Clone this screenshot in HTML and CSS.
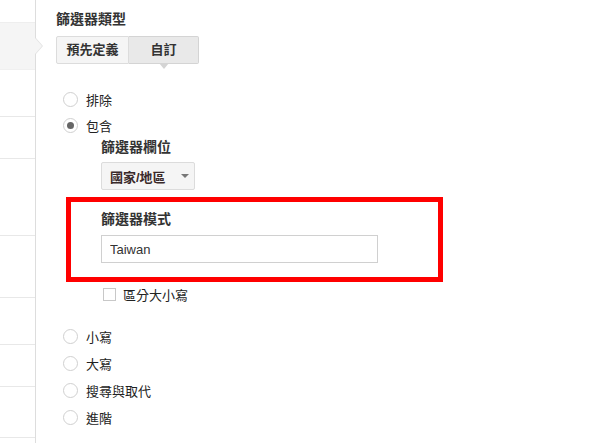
FILE: index.html
```html
<!DOCTYPE html>
<html>
<head lang="zh-tw">
    <meta charset="UTF-8">
    <title>篩選器類型</title>
    <link rel="stylesheet" href="styles.css">
</head>
<body>
    <div class="page">
        <ul class="side">
            <li></li>
            <li class="side-on"></li>
            <li></li>
            <li></li>
            <li></li>
            <li></li>
            <li></li>
            <li></li>
            <li></li>
        </ul>
        <div class="main">
            <h3 class="title">篩選器類型</h3>
            <div class="tabs">
                <a href="javascript:" class="tab tab-pre">預先定義</a>
                <a href="javascript:" class="tab tab-own tab-on">自訂</a>
            </div>
            <ul class="opts">
                <li class="opt"><span class="radio"></span>排除</li>
                <li class="opt"><span class="radio radio-on"></span>包含</li>
            </ul>
            <div class="sub">
                <p class="label field-label">篩選器欄位</p>
                <a href="javascript:" class="select">國家/地區<span class="caret"></span></a>
                <div class="mark">
                    <p class="label">篩選器模式</p>
                    <input type="text" class="text" value="Taiwan">
                </div>
                <p class="check"><span class="box"></span>區分大小寫</p>
            </div>
            <ul class="opts opts-more">
                <li class="opt opt-wide"><span class="radio"></span>小寫</li>
                <li class="opt opt-wide"><span class="radio"></span>大寫</li>
                <li class="opt opt-wide"><span class="radio"></span>搜尋與取代</li>
                <li class="opt opt-wide"><span class="radio"></span>進階</li>
            </ul>
        </div>
    </div>
</body>
</html>
```

FILE: styles.css
```css
body,p,ul,h3 { margin: 0; padding: 0;}
body { font-family: "Liberation Sans", "Noto Sans CJK TC", Arial, sans-serif; font-size: 13px; color: #222; background: #fff;}
li { list-style: none;}
a { text-decoration: none; color: #333;}
.page {
    display: flex;
    height: 443px;
    overflow: hidden;
}
.side {
    width: 35px;
    flex: none;
    border-right: 1px solid #ddd;
}
.side li {
    position: relative;
    height: 46px;
    border-bottom: 1px solid #e8e8e8;
}
.side li:nth-child(1) { height: 22px; border-bottom-color: #eee;}
.side li:nth-child(4) { height: 41px;}
.side li:nth-child(5) { height: 76px;}
.side li:nth-child(6) { height: 61px;}
.side li:nth-child(8) { height: 41px;}
.side li:nth-child(9) { height: 50px;}
.side .side-on { background-color: #f5f5f5; border-bottom-color: #f0f0f0;}
.side-on:before,.side-on:after {
    content: "";
    position: absolute;
    top: 15px;
    border: 8px solid transparent;
    border-right: none;
}
.side-on:before { left: 36px; border-left: 7px solid #e2e2e2;}
.side-on:after { left: 35px; border-left: 7px solid #f5f5f5;}
.main {
    flex: 1;
    padding: 10px 0 0 20px;
}
.title {
    font-size: 14px;
    line-height: 18px;
    color: #333;
}
.tabs {
    display: flex;
    margin-top: 8px;
}
.tab {
    position: relative;
    height: 26px;
    line-height: 26px;
    text-align: center;
    font-weight: bold;
    border: 1px solid #dcdcdc;
    background-color: #f5f5f5;
}
.tab-pre { width: 71px; border-radius: 2px 0 0 2px;}
.tab-own { width: 69px; border-left: none; border-radius: 0 2px 2px 0;}
.tab-on { background-color: #e9e9e9; border-color: #d4d4d4;}
.tab-on:after {
    content: "";
    position: absolute;
    left: 30px;
    bottom: -6px;
    border: 5px solid transparent;
    border-bottom: none;
    border-top: 6px solid #d4d4d4;
}
.opts { margin-top: 22px; padding-left: 7px;}
.opt {
    display: flex;
    align-items: center;
    height: 26px;
}
.opts-more { margin-top: 19px;}
.opt-wide { height: 27px;}
.radio {
    position: relative;
    width: 13px;
    height: 13px;
    margin-right: 8px;
    border: 1px solid #d0d0d0;
    border-radius: 50%;
    background-color: #fff;
}
.radio-on:after {
    content: "";
    position: absolute;
    left: 3px;
    top: 3px;
    width: 7px;
    height: 7px;
    border-radius: 50%;
    background-color: #666;
}
.label {
    font-size: 14px;
    font-weight: bold;
    line-height: 18px;
    color: #333;
}
.field-label { margin-left: 45px;}
.select {
    display: flex;
    align-items: center;
    width: 84px;
    height: 26px;
    margin: 6px 0 0 45px;
    padding-left: 8px;
    font-weight: bold;
    color: #3a2a2a;
    border: 1px solid #dcdcdc;
    border-radius: 2px;
    background-color: #f5f5f5;
}
.caret {
    margin-left: 15px;
    border: 4px solid transparent;
    border-bottom: none;
    border-top: 4px solid #777;
}
.mark {
    width: 337px;
    margin: 7px 0 0 10px;
    padding: 8px 0 14px 30px;
    border: 5px solid #ff0000;
}
.text {
    display: block;
    box-sizing: border-box;
    width: 277px;
    height: 28px;
    margin-top: 7px;
    padding: 0 8px;
    font-family: "Liberation Sans", Arial, sans-serif;
    font-size: 13px;
    color: #333;
    border: 1px solid #d0d0d0;
    border-radius: 0;
    outline: none;
}
.check {
    display: flex;
    align-items: center;
    height: 20px;
    margin: 2px 0 0 47px;
}
.box {
    width: 11px;
    height: 11px;
    margin-right: 7px;
    border: 1px solid #c8c8c8;
    background-color: #fff;
}
```
